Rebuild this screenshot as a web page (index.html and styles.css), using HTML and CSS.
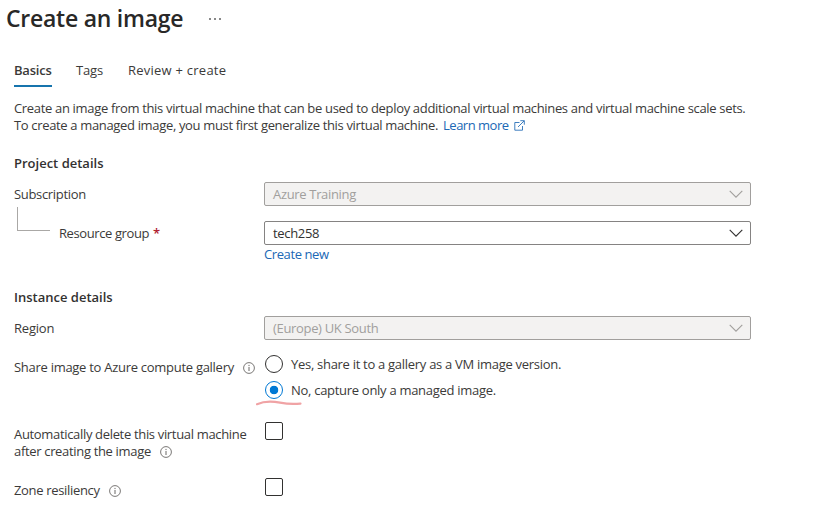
FILE: index.html
```
<!DOCTYPE html>
<html lang="en">
<head>
<meta charset="utf-8">
<title>Create an image</title>
<link rel="stylesheet" href="styles.css">
</head>
<body>
<svg class="defs" width="0" height="0">
  <symbol id="info" viewBox="0 0 12 12"><circle cx="6" cy="6" r="5.4" fill="none" stroke="#6b6967" stroke-width=".9"/><path d="M6 5v4M6 2.9v1.2" stroke="#6b6967" stroke-width="1"/></symbol>
  <symbol id="chevron" viewBox="0 0 14 8"><path d="M.7.8 7 7.1 13.3.8" fill="none" stroke="currentColor" stroke-width="1.1"/></symbol>
</svg>
<header class="header"><h1 class="title">Create an image</h1><span class="more"><i></i><i></i><i></i></span></header>
<nav class="tabs"><a class="tab active">Basics</a><a class="tab tags">Tags</a><a class="tab review">Review + create</a></nav>
<main class="form">
  <p class="intro"><span class="line1">Create an image from this virtual machine that can be used to deploy additional virtual machines and virtual machine scale sets.</span><br><span class="line2">To create a managed image, you must first generalize this virtual machine.</span> <a class="link learn">Learn more</a><svg class="external" viewBox="0 0 11 11"><path d="M5.5 2.5H.8v7.7h7.7V6M6.3.7h4v4M10.2.8 4 7" fill="none" stroke="#2a70b8" stroke-width=".9"/></svg></p>

  <h2 class="section">Project details</h2>
  <div class="row subscription">
    <div class="label">Subscription</div>
    <div class="select disabled"><span>Azure Training</span><svg class="chevron"><use href="#chevron"/></svg></div>
  </div>
  <div class="row group">
    <div class="label nested"><span class="branch"></span><span class="group-name">Resource group</span><span class="required">*</span></div>
    <div class="select"><span>tech258</span><svg class="chevron"><use href="#chevron"/></svg></div>
  </div>
  <a class="link create">Create new</a>

  <h2 class="section instance">Instance details</h2>
  <div class="row region">
    <div class="label region-label">Region</div>
    <div class="select disabled"><span>(Europe) UK South</span><svg class="chevron"><use href="#chevron"/></svg></div>
  </div>
  <div class="row share">
    <div class="label"><span class="share-name">Share image to Azure compute gallery</span><svg class="info"><use href="#info"/></svg></div>
    <div class="radios">
      <div class="option"><span class="radio"></span><span>Yes, share it to a gallery as a VM image version.</span></div>
      <div class="option"><span class="radio checked"></span><span>No, capture only a managed image.</span>
        <svg class="underline" viewBox="0 0 48 8"><path d="M2 5.200C9 2.200 17 2.200 25 3.700S37 5.500 45.500 4.600" fill="none" stroke="#f0a3a5" stroke-width="2.200" stroke-linecap="round"/></svg></div>
    </div>
  </div>
  <div class="row delete">
    <div class="label delete-label"><span>Automatically delete this virtual machine</span><br><span>after creating the image</span><svg class="info"><use href="#info"/></svg></div>
    <span class="checkbox"></span>
  </div>
  <div class="row zone">
    <div class="label zone-label"><span>Zone resiliency</span><svg class="info"><use href="#info"/></svg></div>
    <span class="checkbox"></span>
  </div>
</main>
</body>
</html>
```
FILE: styles.css
```
* { box-sizing: border-box; }
body { margin: 0; height: 529px; overflow: hidden; background: #fff; color: #3b3a39; font: 13px/18px "Open Sans", "Noto Sans", sans-serif; letter-spacing: -.33px; }
.defs { position: absolute; }
h1, h2, p { margin: 0; }
.header { display: flex; height: 61px; padding-left: 6px; }
.title { width: 203px; font-size: 23px; line-height: 36px; font-weight: 600; letter-spacing: -.25px; color: #292827; white-space: nowrap; }
.more { display: flex; gap: 3px; padding-top: 18px; }
.more i { width: 2px; height: 2px; background: #888; }
.tabs { display: flex; height: 26px; margin-left: 14px; }
.tab.active { width: 38px; font-weight: 600; border-bottom: 2px solid #1674ad; letter-spacing: -.2px; }
.tags { width: 52px; margin-left: 24px; letter-spacing: -.17px; }
.review { letter-spacing: .24px; }
.form { padding-left: 14px; white-space: nowrap; }
.intro { margin-top: 13px; line-height: 17px; }
.line2 { letter-spacing: -.34px; }
.learn { margin-left: 2px; letter-spacing: -.5px; }
.link { color: #2068b5; }
.external { width: 11px; height: 11px; margin-left: 5px; vertical-align: -1px; }
.section { margin-top: 20px; font-size: 13px; line-height: 18px; font-weight: 600; letter-spacing: 0; color: #323130; }
.row { display: flex; }
.label { width: 250px; line-height: 24px; flex: none; }
.subscription, .region { margin-top: 10px; }
.region-label { letter-spacing: -.2px; }
.select { width: 487px; height: 24px; display: flex; align-items: center; justify-content: space-between; padding: 0 7px 0 8px; border: 1px solid #858382; border-radius: 2px; color: #323130; }
.select.disabled { background: #f3f2f1; color: #a19f9d; border-color: #a19f9d; }
.chevron { width: 14px; height: 8px; }
.group { margin-top: 15px; }
.nested { display: flex; }
.group-name { letter-spacing: -.4px; }
.branch { width: 33px; height: 24px; margin: -14px 9px 0 3px; border: solid #aaa8a6; border-width: 0 0 1px 1px; }
.required { color: #b02030; margin-left: 4px; font-size: 13px; font-weight: 600; }
.create { display: block; width: fit-content; margin-left: 250px; letter-spacing: -.4px; }
.instance { margin-top: 25px; }
.share { margin-top: 15px; }
.share-name { letter-spacing: -.28px; }
.info { width: 12px; height: 12px; margin-left: 9px; vertical-align: -2px; }
.radios { display: flex; flex-direction: column; gap: 8px; letter-spacing: -.29px; }
.option { display: flex; height: 18px; position: relative; }
.radio { width: 18px; height: 18px; margin: 0 8px 0 1px; border: 1px solid #323130; border-radius: 50%; }
.radio.checked { border-color: #0078d4; background: radial-gradient(circle, #0078d4 0 4px, transparent 4.6px); }
.underline { position: absolute; left: -9px; top: 18px; width: 48px; height: 8px; }
.delete { margin-top: 23px; }
.delete-label { line-height: 17px; padding-top: 4px; }
.checkbox { width: 18px; height: 18px; margin-left: 1px; border: 1px solid #323130; border-radius: 2px; }
.zone { margin-top: 18px; }
.zone-label { line-height: 18px; padding-top: 3px; }
```
